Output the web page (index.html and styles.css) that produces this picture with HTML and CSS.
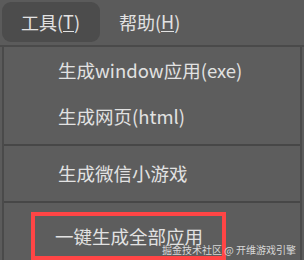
FILE: index.html
```html
<!DOCTYPE html>
<html lang="zh">
<head>
<meta charset="utf-8">
<link rel="stylesheet" href="styles.css">
</head>
<body>
<div class="menubar">
  <div class="top-item active">工具(<u>T</u>)</div>
  <div class="top-item">帮助(<u>H</u>)</div>
</div>
<div class="dropdown">
  <div class="entry">生成window应用(exe)</div>
  <div class="entry">生成网页(html)</div>
  <div class="sep"></div>
  <div class="entry">生成微信小游戏</div>
  <div class="sep"></div>
  <div class="entry last"><span class="highlight">一键生成全部应用</span></div>
  <div class="watermark">掘金技术社区 @ 开维游戏引擎</div>
</div>
</body>
</html>
```
FILE: styles.css
```css
html, body {
  margin: 0;
  padding: 0;
  width: 304px;
  height: 260px;
  overflow: hidden;
  background: #5b5b5b;
  font-family: "Noto Sans CJK SC", "Noto Sans", sans-serif;
  color: #e2e2e2;
}
.menubar {
  display: flex;
  align-items: flex-start;
  height: 43px;
  padding: 2px 0 0 2px;
  border-bottom: 2px solid #4a4a4a;
}
.top-item {
  display: flex;
  align-items: center;
  font-size: 18px;
  padding: 0 19px;
  height: 40px;
}
.top-item.active {
  background: #4c4c4c;
  border-radius: 9px;
  width: 60px;
}
.top-item u {
  text-decoration: none;
  border-bottom: 1.5px solid #e2e2e2;
  line-height: 1.05;
}
.dropdown {
  position: relative;
  margin: 0 2px 0 2px;
  border-left: 2px solid #4a4a4a;
  border-right: 2px solid #4a4a4a;
  height: 215px;
  background: #5d5d5d;
}
.entry {
  font-size: 18.5px;
  height: 46px;
  display: flex;
  align-items: center;
  padding-left: 54px;
}
.sep {
  height: 2px;
  background: #474747;
  margin: 5px 0 4px;
}
.entry.last {
  padding-left: 27px;
  align-items: flex-start;
  padding-top: 5px;
}
.highlight {
  border: 4px solid #ff4545;
  padding: 0 19px 0 20px;
  line-height: 40px;
  height: 48px;
  box-sizing: border-box;
}
.watermark {
  position: absolute;
  right: 4px;
  bottom: 6px;
  font-size: 10px;
  line-height: 12px;
  color: #d8d8d8;
}
```
